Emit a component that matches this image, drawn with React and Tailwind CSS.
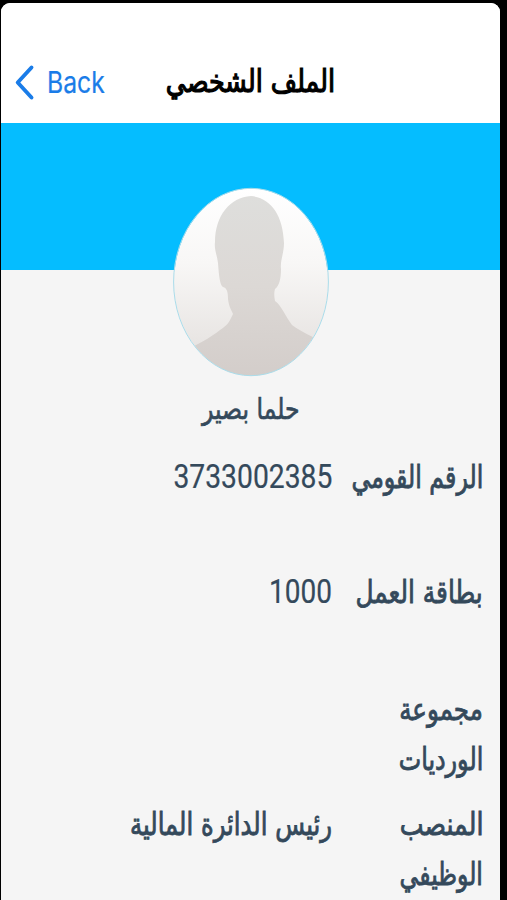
const ARABIC_FONT = "font-['DejaVu_Sans_Condensed','DejaVu_Sans',sans-serif]";
const LABEL_FONT = `${ARABIC_FONT} text-[27px] [-webkit-text-stroke:0.7px_currentColor]`;
const NUMBER_FONT = "font-['Roboto',sans-serif] text-[28px] [-webkit-text-stroke:0.2px_currentColor]";

const rows = [
  {
    id: 'national-id',
    height: 'h-[115px]',
    label: [{ text: 'الرقم القومي', scale: 'scale-x-[0.975]' }],
    value: '3733002385',
    valueClass: `${NUMBER_FONT} scale-x-[1.01] scale-y-[1.16]`,
  },
  {
    id: 'work-card',
    height: 'h-[117px]',
    label: [{ text: 'بطاقة العمل', scale: 'scale-x-[1.02]' }],
    value: '1000',
    valueClass: `${NUMBER_FONT} scale-x-100 scale-y-[1.16]`,
  },
  {
    id: 'shift-group',
    height: 'h-[115px]',
    label: [
      { text: 'مجموعة', scale: 'scale-x-[1.01]' },
      { text: 'الورديات', scale: 'scale-x-[0.98]' },
    ],
  },
  {
    id: 'position',
    height: 'h-[115px]',
    label: [
      { text: 'المنصب', scale: 'scale-x-[1.04]' },
      { text: 'الوظيفي', scale: 'scale-x-[0.97]' },
    ],
    value: 'رئيس الدائرة المالية',
    valueClass: `${LABEL_FONT} scale-x-100 scale-y-[1.15]`,
  },
];

function Header() {
  return (
    <header className="flex h-[120px] shrink-0 items-center bg-white pt-[40px] pl-[14px]">
      <button className="flex w-[96px] shrink-0 items-center text-[#1a7ce8]">
        <svg width="20" height="38" viewBox="0 0 20 38" fill="none" className="shrink-0">
          <path d="M16.5 3.5 2.7 18.5 16.5 33.5" stroke="currentColor" strokeWidth="3.9" strokeLinecap="round" strokeLinejoin="round" />
        </svg>
        <span className="ml-3 origin-left scale-x-[0.95] scale-y-115 font-['Inter',sans-serif] text-[26px] leading-[38px] [-webkit-text-stroke:0.2px_currentColor]">
          Back
        </span>
      </button>
      <h1 dir="rtl" className={`mb-[3px] ml-[55px] w-[169px] origin-right scale-x-[1.045] scale-y-[1.15] ${ARABIC_FONT} text-[27px] leading-[34px] whitespace-nowrap text-black [-webkit-text-stroke:1px_currentColor]`}>
        الملف الشخصي
      </h1>
    </header>
  );
}

function Avatar() {
  return (
    <svg width="158" height="190" viewBox="0 0 158 190" className="mt-[64px] shrink-0">
      <defs>
        <linearGradient id="backdrop" x1="0" y1="0" x2="0" y2="1">
          <stop offset="0" stopColor="#ffffff" />
          <stop offset="0.4" stopColor="#f8f7f6" />
          <stop offset="0.8" stopColor="#e9e6e4" />
          <stop offset="1" stopColor="#dedad8" />
        </linearGradient>
        <linearGradient id="person" x1="0" y1="0" x2="0" y2="1">
          <stop offset="0" stopColor="#dededc" />
          <stop offset="0.5" stopColor="#dcd8d5" />
          <stop offset="1" stopColor="#d3cdca" />
        </linearGradient>
        <clipPath id="oval">
          <ellipse cx="79" cy="95" rx="77" ry="93.5" />
        </clipPath>
      </defs>
      <ellipse cx="79" cy="95" rx="77" ry="93.5" fill="url(#backdrop)" />
      <path
        clipPath="url(#oval)"
        fill="url(#person)"
        d="M79 9C58 10 43 29 43 55C42 62 45 68 46 76C47 90 48 98 51 100C55 101 56 105 56 112C57 120 59 122 61 127C57 135 57 137 48 143C38 151 25 158 8 166V190H152V157C141 149 129 145 120 138C114 130 109 118 103 114C102 109 102 105 103 102C107 99 109 92 109 82C108 74 112 66 112 56C111 28 99 11 79 9Z"
      />
      <ellipse cx="79" cy="95" rx="77.4" ry="93.7" fill="none" stroke="#aadcea" strokeWidth="1" />
    </svg>
  );
}

function InfoRow({ row }) {
  return (
    <div className={`flex shrink-0 items-start ${row.height}`}>
      <dt className="w-[151px] shrink-0">
        {row.label.map(({ text, scale }) => (
          <span key={text} className={`block w-fit origin-right scale-y-[1.15] leading-[50px] whitespace-nowrap ${LABEL_FONT} ${scale}`}>
            {text}
          </span>
        ))}
      </dt>
      {row.value && (
        <dd className={`origin-right leading-[50px] whitespace-nowrap ${row.valueClass}`}>{row.value}</dd>
      )}
    </div>
  );
}

export default function App() {
  return (
    <div className="h-[900px] w-[507px] overflow-hidden bg-black pt-[3px] pr-[7px] pl-[1px]">
      <div className="flex h-full flex-col overflow-hidden rounded-t-[9px] bg-[#f5f5f5]">
        <Header />
        <main className="flex flex-col text-[#34495b]">
          <div className="flex h-[147px] shrink-0 justify-center bg-[#05bdff]">
            <Avatar />
          </div>
          <h2 dir="rtl" className={`mt-[119px] origin-center scale-x-[1.09] scale-y-[1.22] self-center ${ARABIC_FONT} text-[24px] leading-[40px] whitespace-nowrap [-webkit-text-stroke:0.5px_currentColor]`}>
            حلما بصير
          </h2>
          <dl dir="rtl" className="mt-[24px] pr-[17px]">
            {rows.map((row) => (
              <InfoRow key={row.id} row={row} />
            ))}
          </dl>
        </main>
      </div>
    </div>
  );
}
